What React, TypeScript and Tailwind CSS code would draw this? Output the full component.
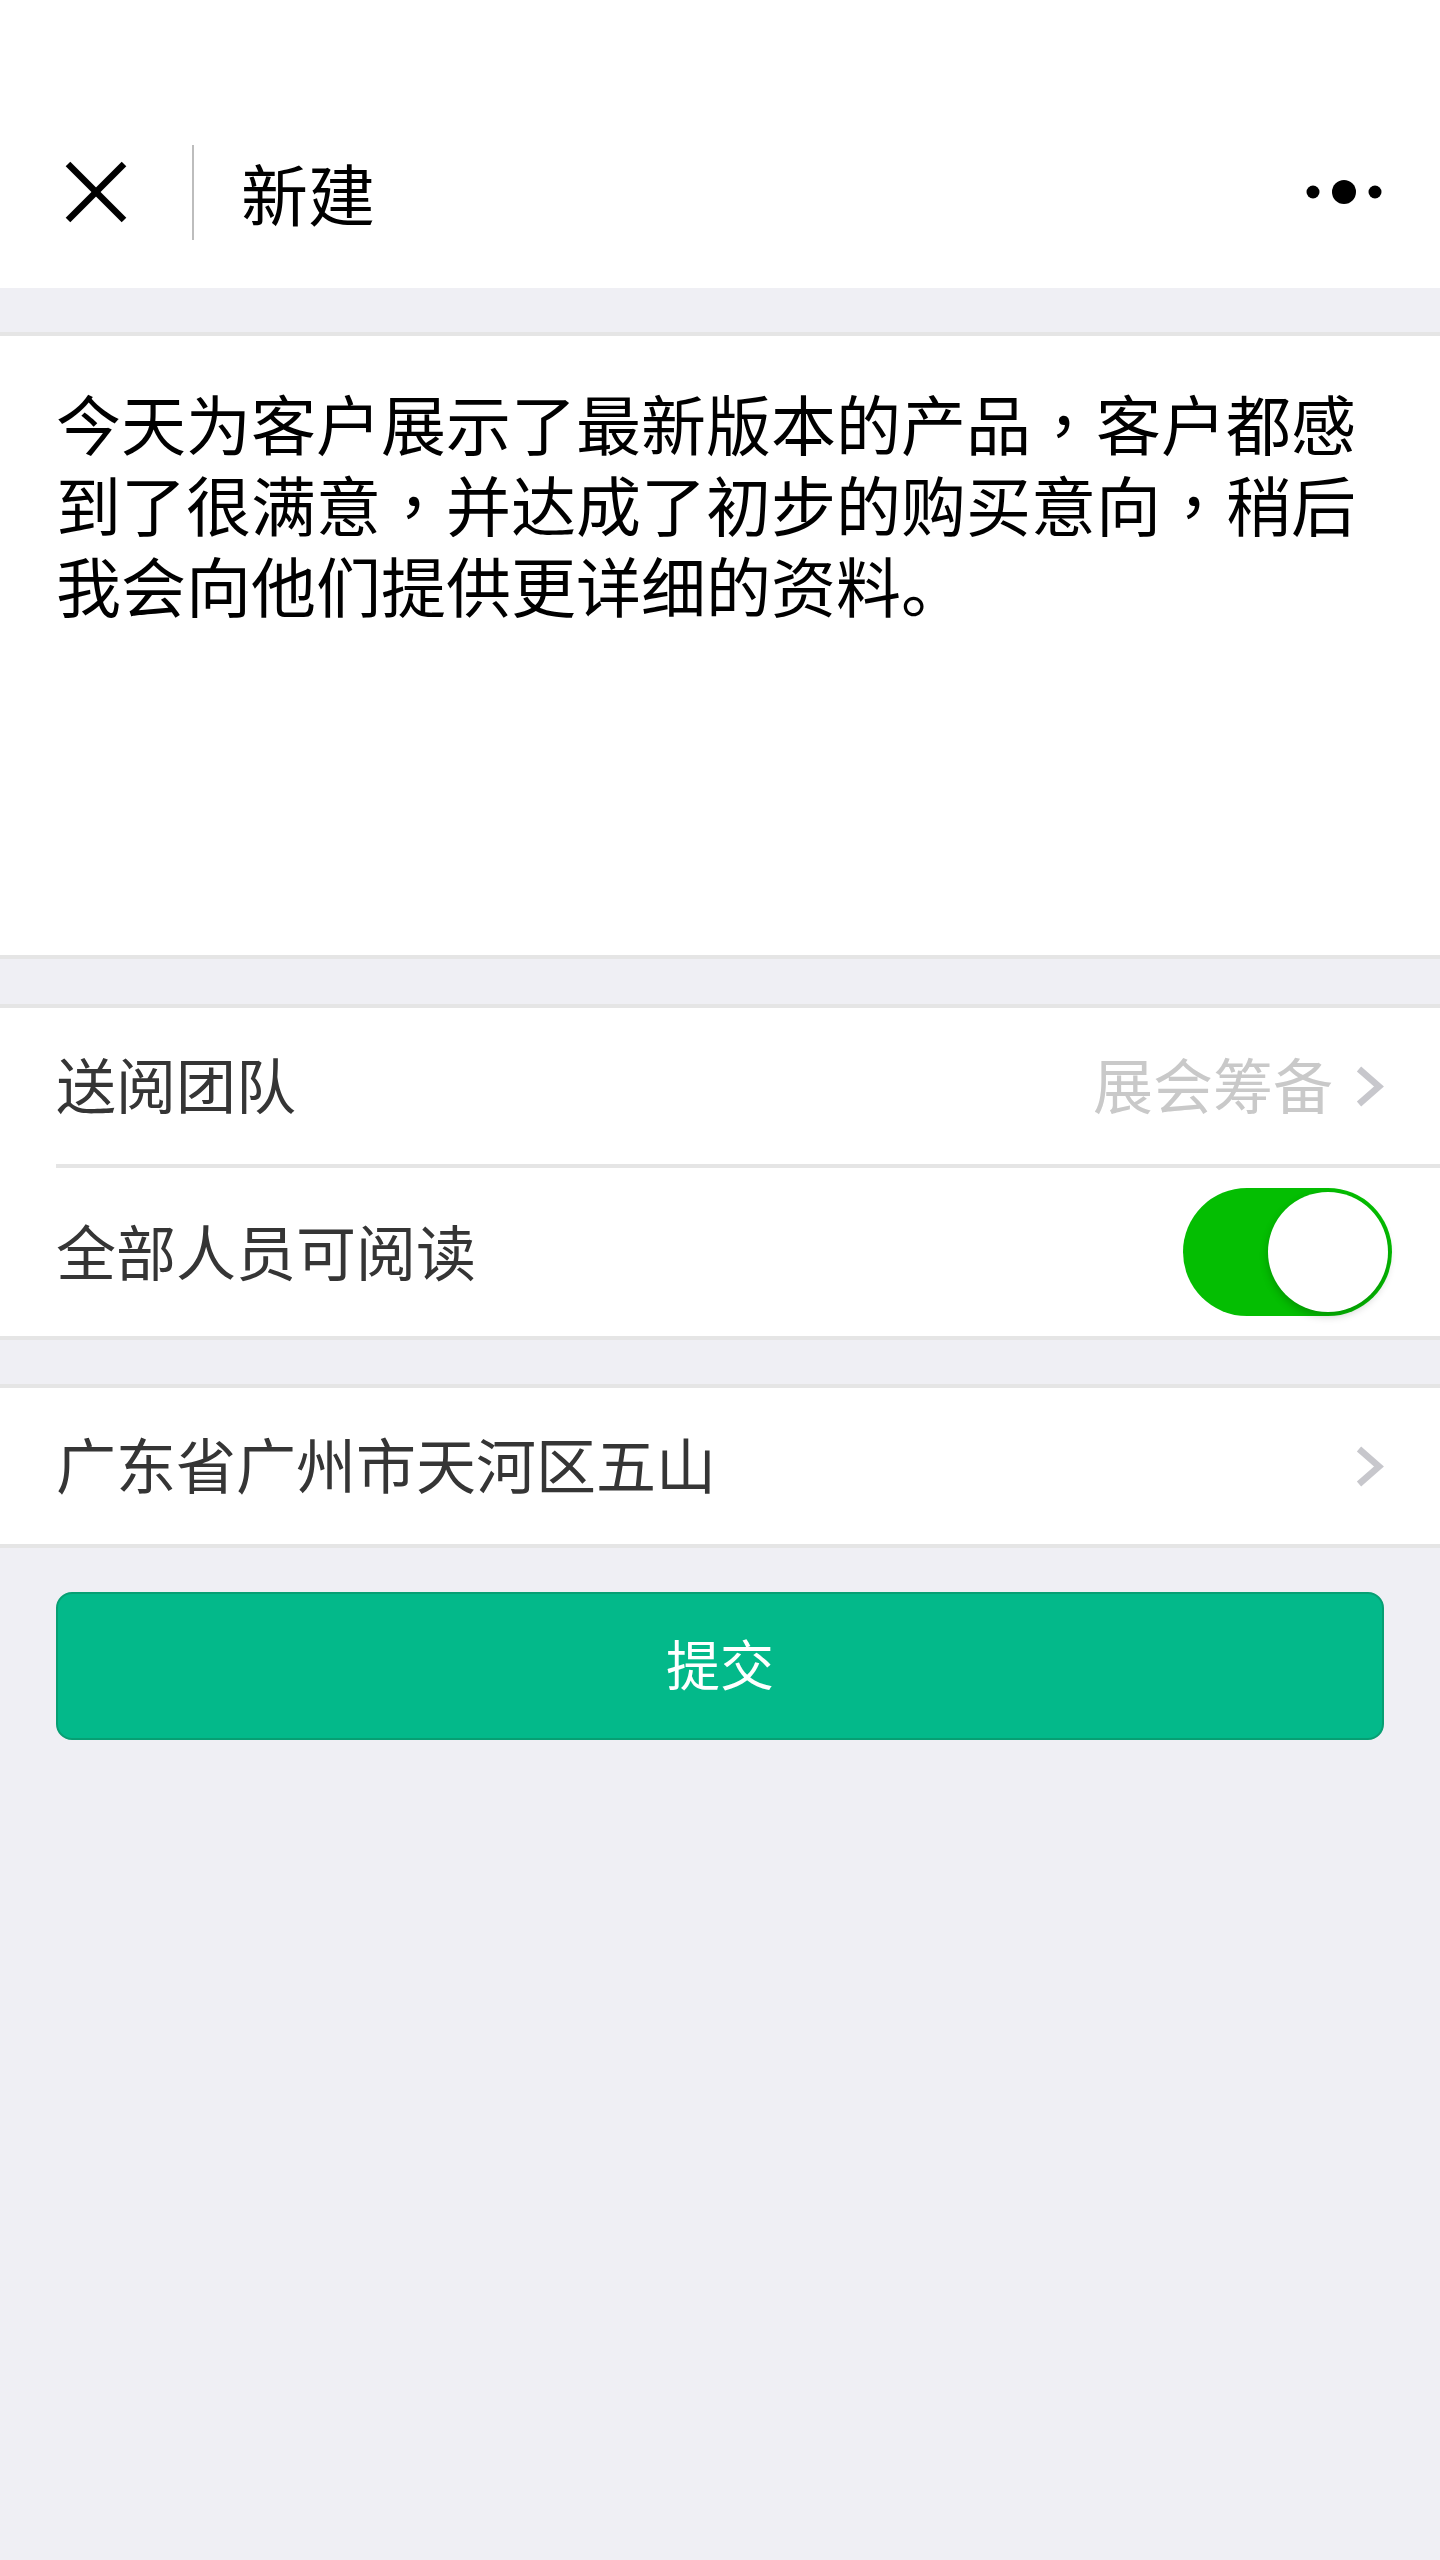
import React, { useState } from 'react';

const FONT = "font-['Noto_Sans_CJK_SC','Noto_Sans',sans-serif]";

// full-width comma drawn centred in its cell
const Comma: React.FC = () => <span className="font-['Noto_Sans_CJK_TC',sans-serif]">，</span>;

const Chevron: React.FC = () => (
    <svg width="29" height="43" viewBox="0 0 29 43" className="shrink-0">
        <polyline points="4,4 24,21.5 4,39" fill="none" stroke="#c7c7cc" strokeWidth="6.5" strokeLinejoin="miter" />
    </svg>
);

const Switch: React.FC<{ on: boolean; onToggle: () => void }> = ({ on, onToggle }) => (
    <button
        type="button"
        onClick={onToggle}
        className={`flex h-[128px] w-[209px] shrink-0 items-center rounded-full px-[4px] ${on ? 'justify-end bg-[#04be02]' : 'justify-start bg-[#e5e5e5]'}`}
    >
        <span className="block h-[120px] w-[120px] rounded-full bg-white shadow-[0_4px_8px_rgba(0,0,0,0.22)]" />
    </button>
);

export default function App() {
    const [publicRead, setPublicRead] = useState(true);

    return (
        <div className={`flex min-h-[2560px] w-[1440px] flex-col bg-[#efeff4] ${FONT}`}>
            {/* nav bar */}
            <div className="h-[288px] shrink-0 bg-white pt-[96px]">
                <div className="flex h-[192px] items-center">
                    <svg width="64" height="64" viewBox="0 0 64 64" className="ml-[64px] shrink-0">
                        <line x1="4" y1="4" x2="60" y2="60" stroke="#000" strokeWidth="6.5" />
                        <line x1="60" y1="4" x2="4" y2="60" stroke="#000" strokeWidth="6.5" />
                    </svg>
                    <div className="ml-[64px] h-[95px] w-[2px] bg-[#bdbdbd]" />
                    <span className="ml-[47px] pb-[2px] text-[67px] leading-none text-black">新建</span>
                    <svg width="80" height="26" viewBox="0 0 80 26" className="ml-auto mr-[56px] shrink-0">
                        <circle cx="9" cy="13" r="6.5" fill="#000" />
                        <circle cx="40" cy="13" r="12" fill="#000" />
                        <circle cx="71" cy="13" r="6.5" fill="#000" />
                    </svg>
                </div>
            </div>

            {/* note body */}
            <div className="mt-[44px] h-[627px] shrink-0 border-y-4 border-[#e5e5e5] bg-white px-[56px] pt-[46px]">
                <p className="text-[65px] leading-[81px] text-black">
                    今天为客户展示了最新版本的产品<Comma />客户都感到了很满意<Comma />并达成了初步的购买意向<Comma />稍后我会向他们提供更详细的资料。
                </p>
            </div>

            {/* sharing options */}
            <div className="mt-[45px] shrink-0 border-y-4 border-[#e5e5e5] bg-white">
                <div className="flex h-[156px] items-center px-[56px]">
                    <span className="pb-[6px] text-[60px] leading-none text-[#353535]">送阅团队</span>
                    <span className="ml-auto pb-[6px] text-[60px] leading-none text-[#c9c9c9]">展会筹备</span>
                    <div className="ml-[22px]">
                        <Chevron />
                    </div>
                </div>
                <div className="ml-[56px] h-[4px] bg-[#e5e5e5]" />
                <div className="flex h-[168px] items-center pl-[56px] pr-[48px]">
                    <span className="pb-[4px] text-[60px] leading-none text-[#353535]">全部人员可阅读</span>
                    <div className="ml-auto">
                        <Switch on={publicRead} onToggle={() => setPublicRead(v => !v)} />
                    </div>
                </div>
            </div>

            {/* location */}
            <div className="mt-[44px] shrink-0 border-y-4 border-[#e5e5e5] bg-white">
                <div className="flex h-[156px] items-center px-[56px]">
                    <span className="pb-[6px] text-[60px] leading-none text-[#353535]">广东省广州市天河区五山</span>
                    <div className="ml-auto">
                        <Chevron />
                    </div>
                </div>
            </div>

            <button
                type="button"
                className="mx-[56px] mt-[44px] flex h-[148px] shrink-0 items-center justify-center rounded-[16px] border-2 border-[#079f73] bg-[#03b98a] pb-[6px] text-[54px] leading-none text-white"
            >
                提交
            </button>
        </div>
    );
}
